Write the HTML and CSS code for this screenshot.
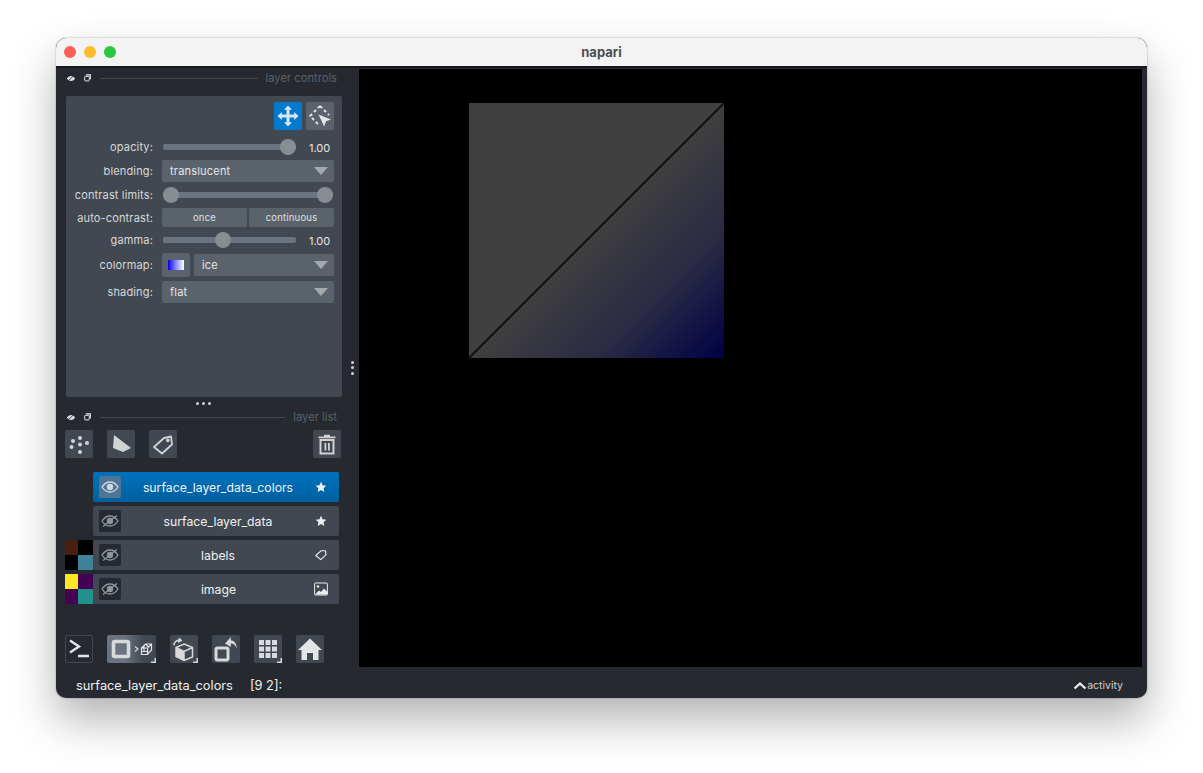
FILE: index.html
```html
<!DOCTYPE html>
<html lang="en">

<head>
  <meta charset="UTF-8">
  <title>napari</title>
  <link rel="stylesheet" href="styles.css">
</head>

<body>
  <svg class="defs" width="0" height="0">
    <symbol id="eye-off" viewBox="0 0 22 22">
      <path d="M3 11c2.200-3.300 5-5 8-5s5.800 1.700 8 5c-2.200 3.300-5 5-8 5s-5.800-1.700-8-5z" fill="none" stroke="#8f959b" stroke-width="1.300"/>
      <circle cx="11" cy="11" r="3.200" fill="#8f959b"/>
      <path d="M4 16.500 18 5.500" stroke="#8f959b" stroke-width="1.300"/>
    </symbol>
    <symbol id="star" viewBox="0 0 12 12">
      <path d="M6 .8l1.600 3.400 3.700.5-2.700 2.500.7 3.700L6 9.100 2.700 10.900l.7-3.700L.7 4.700l3.700-.5z" fill="#eceded"/>
    </symbol>
    <symbol id="link" viewBox="0 0 12 12">
      <path d="M3.500 1.500h6v6h-1.500v-4.500h-4.500z" fill="#e4e5e6"/>
      <rect x="2" y="4" width="5.500" height="5.500" rx="1" fill="none" stroke="#e4e5e6" stroke-width="1.200"/>
    </symbol>
    <symbol id="float-eye" viewBox="0 0 12 12">
      <path d="M1 6.500c1.400-2 3-3 5-3s3.600 1 5 3c-1.400 2-3 3-5 3s-3.600-1-5-3z" fill="#dfe0e1"/>
      <path d="M2.500 9.500 9.500 3" stroke="#262930" stroke-width="1"/>
    </symbol>
  </svg>

  <div class="window">
    <div class="titlebar">
      <div class="lights">
        <span class="light red"></span>
        <span class="light yellow"></span>
        <span class="light green"></span>
      </div>
      <span class="title">napari</span>
    </div>

    <div class="main">
      <div class="sidebar">
        <div class="dock-head head-controls">
          <svg class="mini"><use href="#float-eye"/></svg>
          <svg class="mini"><use href="#link"/></svg>
          <span class="dock-line"></span>
          <span class="dock-title">layer controls</span>
        </div>

        <div class="controls">
          <div class="mode-row">
            <button class="icon-btn mode active">
              <svg width="24" height="24" viewBox="0 0 24 24"><path d="M12 1.500l4 4.300h-2.500v4.700h4.700V8l4.300 4-4.300 4v-2.500h-4.700v4.700H16l-4 4.300-4-4.300h2.500v-4.700H5.800V16l-4.300-4 4.300-4v2.500h4.700V5.800H8z" fill="#d6e6f2"/></svg>
            </button>
            <button class="icon-btn mode">
              <svg width="26" height="26" viewBox="0 0 26 26">
                <path d="M13 3 3 13l9 9" fill="none" stroke="#e2e3e4" stroke-width="2" stroke-dasharray="3 2.600"/>
                <path d="M13 3l9 9" fill="none" stroke="#e2e3e4" stroke-width="2" stroke-dasharray="3 2.600"/>
                <path d="M11.500 11.500 24 16.500l-5 1.800-1.800 5.200z" fill="#e2e3e4"/>
              </svg>
            </button>
          </div>

          <div class="row row-opacity">
            <label class="row-label">opacity:</label>
            <div class="slider short"><span class="thumb" style="left: 125px"></span></div>
            <span class="value">1.00</span>
          </div>
          <div class="row row-blending">
            <label class="row-label">blending:</label>
            <div class="select">translucent<span class="arrow"></span></div>
          </div>
          <div class="row row-contrast">
            <label class="row-label">contrast limits:</label>
            <div class="slider long">
              <span class="thumb" style="left: 8px"></span>
              <span class="thumb" style="left: 162px"></span>
            </div>
          </div>
          <div class="row row-auto">
            <label class="row-label">auto-contrast:</label>
            <div class="btn-pair">
              <button class="text-btn">once</button>
              <button class="text-btn">continuous</button>
            </div>
          </div>
          <div class="row row-gamma">
            <label class="row-label">gamma:</label>
            <div class="slider short"><span class="thumb" style="left: 60px"></span></div>
            <span class="value">1.00</span>
          </div>
          <div class="row row-colormap">
            <label class="row-label">colormap:</label>
            <div class="cmap-box"><span class="cmap"></span></div>
            <div class="select">ice<span class="arrow"></span></div>
          </div>
          <div class="row row-shading">
            <label class="row-label">shading:</label>
            <div class="select">flat<span class="arrow"></span></div>
          </div>
        </div>

        <div class="dots-h"><span></span><span></span><span></span></div>

        <div class="dock-head head-list">
          <svg class="mini"><use href="#float-eye"/></svg>
          <svg class="mini"><use href="#link"/></svg>
          <span class="dock-line"></span>
          <span class="dock-title">layer list</span>
        </div>

        <div class="list-tools">
          <button class="icon-btn">
            <svg width="28" height="28" viewBox="0 0 28 28" fill="#d1d2d4">
              <circle cx="15" cy="8" r="2"/><circle cx="8" cy="11" r="2"/><circle cx="15" cy="14.500" r="2"/>
              <circle cx="22" cy="13" r="2"/><circle cx="6.500" cy="17" r="2"/><circle cx="15" cy="22" r="2"/>
            </svg>
          </button>
          <button class="icon-btn">
            <svg width="28" height="28" viewBox="0 0 28 28"><path d="M7 5 24 18l-8 4-10-4z" fill="#d1d2d4"/></svg>
          </button>
          <button class="icon-btn">
            <svg width="28" height="28" viewBox="0 0 28 28"><path d="M5 17 15 8l7-1.500 1 8L13 23.500zM18.800 9.500a.9.900 0 1 0 .1 0z" fill="none" stroke="#d1d2d4" stroke-width="1.800" stroke-linejoin="round"/></svg>
          </button>
          <button class="icon-btn trash">
            <svg width="28" height="28" viewBox="0 0 28 28">
              <path d="M5.500 6.500h17v1.800h-17zM11 6.500V4.800h6v1.700z" fill="#d1d2d4"/>
              <path d="M7.500 10h13v13.500h-13z" fill="none" stroke="#d1d2d4" stroke-width="2"/>
              <path d="M11.500 13h1.800v7.500h-1.800zM15 13h1.800v7.500H15z" fill="#d1d2d4"/>
            </svg>
          </button>
        </div>

        <div class="layers">
          <div class="layer-row">
            <span class="thumb-cell"></span>
            <div class="layer current">
              <span class="eye on">
                <svg width="22" height="22" viewBox="0 0 22 22">
                  <path d="M3 11c2.200-3.300 5-5 8-5s5.800 1.700 8 5c-2.200 3.300-5 5-8 5s-5.800-1.700-8-5z" fill="none" stroke="#cfd8e0" stroke-width="1.300"/>
                  <circle cx="11" cy="11" r="3.200" fill="#cfd8e0"/>
                </svg>
              </span>
              <span class="layer-name">surface_layer_data_colors</span>
              <svg class="layer-type"><use href="#star"/></svg>
            </div>
          </div>
          <div class="layer-row">
            <span class="thumb-cell"></span>
            <div class="layer">
              <span class="eye"><svg width="22" height="22"><use href="#eye-off"/></svg></span>
              <span class="layer-name">surface_layer_data</span>
              <svg class="layer-type"><use href="#star"/></svg>
            </div>
          </div>
          <div class="layer-row">
            <span class="thumb-cell quad">
              <i class="c-brown"></i><i class="c-black"></i><i class="c-black"></i><i class="c-teal"></i>
            </span>
            <div class="layer">
              <span class="eye"><svg width="22" height="22"><use href="#eye-off"/></svg></span>
              <span class="layer-name">labels</span>
              <svg class="layer-type" viewBox="0 0 12 12"><path d="M.8 6.500 6 1.800h4.500l.5 3.900-5.200 5z" fill="none" stroke="#eceded" stroke-width="1.100" stroke-linejoin="round"/></svg>
            </div>
          </div>
          <div class="layer-row">
            <span class="thumb-cell quad">
              <i class="c-yellow"></i><i class="c-purple"></i><i class="c-purple"></i><i class="c-green"></i>
            </span>
            <div class="layer">
              <span class="eye"><svg width="22" height="22"><use href="#eye-off"/></svg></span>
              <span class="layer-name">image</span>
              <svg class="layer-type wide" viewBox="0 0 14 14">
                <rect x=".6" y="1" width="12.800" height="12" rx="1" fill="none" stroke="#eceded" stroke-width="1"/>
                <circle cx="4" cy="4.500" r="1.300" fill="#eceded"/>
                <path d="M1 12.500l4-4 2 1.500 3-3.500 3.500 3.500v2.500z" fill="#eceded"/>
              </svg>
            </div>
          </div>
        </div>

        <div class="viewer-btns">
          <button class="icon-btn console">
            <svg width="26" height="26" viewBox="0 0 26 26"><path d="M4 4.500l9 6-9 6" fill="none" stroke="#e4e5e6" stroke-width="2.400"/><path d="M12 20h11" stroke="#e4e5e6" stroke-width="2.400"/></svg>
          </button>
          <button class="icon-btn ndisplay">
            <svg width="49" height="28" viewBox="0 0 49 28">
              <rect x="6.500" y="6.500" width="15" height="15" rx="1.500" fill="none" stroke="#d8d9da" stroke-width="3.600"/>
              <path d="M28 11.500l3 2.500-3 2.500" fill="none" stroke="#d8d9da" stroke-width="1.200"/>
              <path d="M34.500 13l4-4h6v6l-4 4.500h-6zM34.500 13h6v6.500M40.500 13l4-4M37 9.500v7M34.500 16.500h7M38.500 9l3 3" fill="none" stroke="#e4e5e6" stroke-width="1.200"/>
              <path d="M49 28h-5v-1.500h3.500V23H49z" fill="#d1d2d4"/>
            </svg>
          </button>
          <button class="icon-btn corner">
            <svg width="28" height="28" viewBox="0 0 28 28">
              <path d="M14 9l8.500 3.500v9.500L14 25.500 6 21.500v-9zM6 12.500l8 4 8.500-4M14 16.500v9" fill="none" stroke="#d8d9da" stroke-width="1.500"/>
              <path d="M14 16.500v9L6 21.500v-9z" fill="#d8d9da"/>
              <path d="M3 10c.5-3 2.500-5 6-6l-.5-2 4 3.500-4.500 2.500v-2c-1.800.800-3 2-3.500 4.500z" fill="#d8d9da"/>
              <path d="M28 28h-5v-1.500h3.500V23H28z" fill="#d1d2d4"/>
            </svg>
          </button>
          <button class="icon-btn">
            <svg width="28" height="28" viewBox="0 0 28 28">
              <rect x="4" y="13" width="12" height="12" rx="1.500" fill="none" stroke="#d8d9da" stroke-width="3"/>
              <path d="M13 8.500 19 2l-.2 3.200c3.200.300 5.400 2.500 6.200 8-1.800-3.200-3.500-4.600-6.300-4.700L19 12z" fill="#d8d9da"/>
            </svg>
          </button>
          <button class="icon-btn corner">
            <svg width="28" height="28" viewBox="0 0 28 28" fill="#d8d9da">
              <rect x="5" y="5" width="5" height="5"/><rect x="11.500" y="5" width="5" height="5"/><rect x="18" y="5" width="5" height="5"/>
              <rect x="5" y="11.500" width="5" height="5"/><rect x="11.500" y="11.500" width="5" height="5"/><rect x="18" y="11.500" width="5" height="5"/>
              <rect x="5" y="18" width="5" height="5"/><rect x="11.500" y="18" width="5" height="5"/><rect x="18" y="18" width="5" height="5"/>
              <path d="M28 28h-5v-1.500h3.500V23H28z"/>
            </svg>
          </button>
          <button class="icon-btn">
            <svg width="28" height="28" viewBox="0 0 28 28"><path d="M14 3.500 26 15h-3.500v10H17v-7h-6v7H5.500V15H2z" fill="#e4e5e6"/></svg>
          </button>
        </div>
      </div>

      <div class="dots-v"><span></span><span></span><span></span></div>

      <div class="canvas">
        <svg class="surface" width="255" height="255" viewBox="0 0 255 255">
          <defs>
            <linearGradient id="blue" x1="128" y1="128" x2="255" y2="255" gradientUnits="userSpaceOnUse">
              <stop offset="0" stop-color="#3f3f3f"/>
              <stop offset="0.5" stop-color="#2a2a44"/>
              <stop offset="1" stop-color="#000046"/>
            </linearGradient>
          </defs>
          <path d="M0 0h255v255H0z" fill="#404040"/>
          <path d="M255 0v255H0z" fill="url(#blue)"/>
          <path d="M0 255 255 0" stroke="#111" stroke-width="2"/>
        </svg>
      </div>
    </div>

    <div class="statusbar">
      <span class="status-layer">surface_layer_data_colors</span>
      <span class="status-pos">[9 2]:</span>
      <span class="activity">
        <svg width="14" height="9" viewBox="0 0 14 9"><path d="M1.500 7.500 7 2.500l5.500 5" fill="none" stroke="#f0f1f2" stroke-width="2.200"/></svg>
        activity
      </span>
    </div>
  </div>
</body>

</html>
```

FILE: styles.css
```css
html {
  height: 100%;
}

body {
  margin: 0;
  min-height: 100%;
  box-sizing: border-box;
  padding: 38px 56px 0;
  background: #fff;
  font-family: Inter, "Liberation Sans", sans-serif;
}

.defs {
  position: absolute;
}

.window {
  width: 1091px;
  height: 660px;
  display: flex;
  flex-direction: column;
  border-radius: 10px;
  overflow: hidden;
  background: #262930;
  box-shadow: 0 22px 45px rgba(0, 0, 0, 0.3), 0 0 2px rgba(0, 0, 0, 0.35);
}

.titlebar {
  height: 28px;
  flex: none;
  display: flex;
  align-items: center;
  justify-content: center;
  position: relative;
  background: #f3f3f3;
  border-bottom: 2px solid #17181b;
}

.lights {
  position: absolute;
  left: 8px;
  top: 8px;
  display: flex;
  gap: 8px;
}

.light {
  width: 12px;
  height: 12px;
  border-radius: 50%;
}

.red { background: #fd5f57; }
.yellow { background: #febb2e; }
.green { background: #29c73f; }

.title {
  font-size: 13px;
  font-weight: 700;
  color: #4e4e4e;
}

.main {
  flex: 1;
  display: flex;
  min-height: 0;
}

.sidebar {
  width: 289px;
  flex: none;
  display: flex;
  flex-direction: column;
}

.dock-head {
  display: flex;
  align-items: center;
  height: 16px;
  margin-left: 10px;
  margin-right: 3px;
}

.head-controls {
  margin-top: 2px;
}

.head-list {
  margin-top: -1px;
}

.mini {
  width: 10px;
  height: 10px;
  margin-right: 7px;
  flex: none;
}

.dock-line {
  flex: 1;
  height: 1px;
  background: #414851;
}

.dock-title {
  margin: 0 5px 0 8px;
  font-size: 11.200px;
  color: #5a626c;
}

.controls {
  width: 276px;
  height: 301px;
  box-sizing: border-box;
  margin: 10px 0 0 10px;
  padding-top: 6px;
  background: #414851;
  border-radius: 2px;
}

.mode-row {
  display: flex;
  justify-content: flex-end;
  gap: 4px;
  padding-right: 8px;
}

button {
  padding: 0;
  border: 0;
  font-family: inherit;
}

.icon-btn {
  width: 28px;
  height: 28px;
  flex: none;
  display: flex;
  align-items: center;
  justify-content: center;
  background: #414851;
  border-radius: 2px;
}

.mode {
  background: #5a626c;
}

.mode.active {
  background: #007acc;
}

.row {
  display: flex;
  align-items: center;
}

.row-label {
  width: 87px;
  flex: none;
  margin-right: 9px;
  text-align: right;
  font-size: 11px;
  letter-spacing: 0.15px;
  color: #d8d9da;
}

.row-opacity { height: 24px; margin-top: 5px; }
.row-blending { height: 22px; margin-top: 1px; }
.row-contrast { height: 22px; margin-top: 2px; }
.row-auto { height: 19px; margin-top: 2px; }
.row-gamma { height: 22px; margin-top: 2px; }
.row-colormap { height: 24px; margin-top: 2px; }
.row-shading { height: 22px; margin-top: 4px; }

.slider {
  position: relative;
  height: 6px;
  margin-left: 1px;
  flex: none;
  border-radius: 2px;
  background: #6a7480;
}

.slider.short {
  width: 133px;
}

.slider.long {
  width: 170px;
}

.thumb {
  position: absolute;
  top: -5px;
  width: 16px;
  height: 16px;
  margin-left: -8px;
  border-radius: 50%;
  background: #868e93;
}

.value {
  margin: 2px 0 0 13px;
  font-size: 11px;
  color: #e6e7e8;
}

.select {
  flex: 1;
  height: 22px;
  margin-right: 8px;
  padding-left: 8px;
  display: flex;
  align-items: center;
  justify-content: space-between;
  font-size: 11px;
  letter-spacing: 0.2px;
  color: #e6e7e8;
  background: #5a626c;
  border-radius: 2px;
}

.arrow {
  width: 0;
  height: 0;
  margin-right: 6px;
  border-left: 7.5px solid transparent;
  border-right: 7.5px solid transparent;
  border-top: 8px solid #a4a9ad;
}

.btn-pair {
  display: flex;
  gap: 2px;
}

.text-btn {
  width: 85px;
  height: 19px;
  font-size: 9.5px;
  letter-spacing: 0.2px;
  color: #dfe0e1;
  background: #5a626c;
  border-radius: 2px;
}

.cmap-box {
  width: 28px;
  height: 24px;
  flex: none;
  margin-right: 4px;
  display: flex;
  align-items: center;
  justify-content: center;
  background: #5a626c;
  border-radius: 2px;
}

.cmap {
  width: 16px;
  height: 10px;
  background: linear-gradient(to right, #0000e0, #8a8aff 50%, #fff);
}

.dots-h {
  height: 13px;
  display: flex;
  align-items: center;
  justify-content: center;
  gap: 3px;
  margin-left: 5px;
}

.dots-h span,
.dots-v span {
  width: 3px;
  height: 3px;
  border-radius: 50%;
  background: #d1d2d4;
}

.list-tools {
  display: flex;
  gap: 14px;
  margin: 5px 0 0 9px;
}

.trash {
  margin-left: 122px;
}

.layers {
  display: flex;
  flex-direction: column;
  gap: 4px;
  margin: 14px 0 0 9px;
}

.layer-row {
  display: flex;
}

.thumb-cell {
  width: 28px;
  height: 30px;
  flex: none;
}

.quad {
  display: grid;
  grid-template-columns: 13px 15px;
  grid-template-rows: 15px 15px;
}

.c-brown { background: #4a1f0e; }
.c-black { background: #000; }
.c-teal { background: #408299; }
.c-yellow { background: #fde725; }
.c-purple { background: #440154; }
.c-green { background: #21918c; }

.layer {
  width: 246px;
  height: 30px;
  display: flex;
  align-items: center;
  background: #414851;
  border-radius: 2px;
}

.layer.current {
  background: linear-gradient(#0072bd, #00609f);
}

.eye {
  width: 22px;
  height: 22px;
  flex: none;
  margin-left: 6px;
  background: #262930;
  border-radius: 2px;
}

.eye.on {
  background: #4f7594;
}

.layer-name {
  flex: 1;
  text-align: center;
  font-size: 12.250px;
  color: #f0f1f2;
}

.layer-type {
  width: 12px;
  height: 12px;
  flex: none;
  margin-right: 12px;
}

.layer-type.wide {
  width: 14px;
  height: 14px;
  margin: 0 11px 0 -2px;
}

.viewer-btns {
  display: flex;
  gap: 14px;
  margin: 31px 0 0 9px;
}

.console {
  background: #262930;
  box-sizing: border-box;
  border: 1px solid #414851;
}

.ndisplay {
  width: 49px;
  background: linear-gradient(to right, #6a7480, #6a7480 35%, #414851 75%);
}

.dots-v {
  width: 14px;
  flex: none;
  display: flex;
  flex-direction: column;
  align-items: center;
  justify-content: center;
  gap: 2.500px;
}

.canvas {
  width: 783px;
  height: 598px;
  flex: none;
  margin-top: 1px;
  padding: 34px 0 0 110px;
  box-sizing: border-box;
  background: #000;
}

.surface {
  display: block;
}

.statusbar {
  height: 31px;
  flex: none;
  display: flex;
  align-items: center;
  padding: 5px 24px 0 20px;
  box-sizing: border-box;
  font-size: 12.800px;
  color: #f0f1f2;
}

.status-pos {
  margin-left: 17px;
}

.activity {
  margin-left: auto;
  display: flex;
  align-items: center;
  font-size: 10.500px;
  color: #d1d2d4;
}
```
